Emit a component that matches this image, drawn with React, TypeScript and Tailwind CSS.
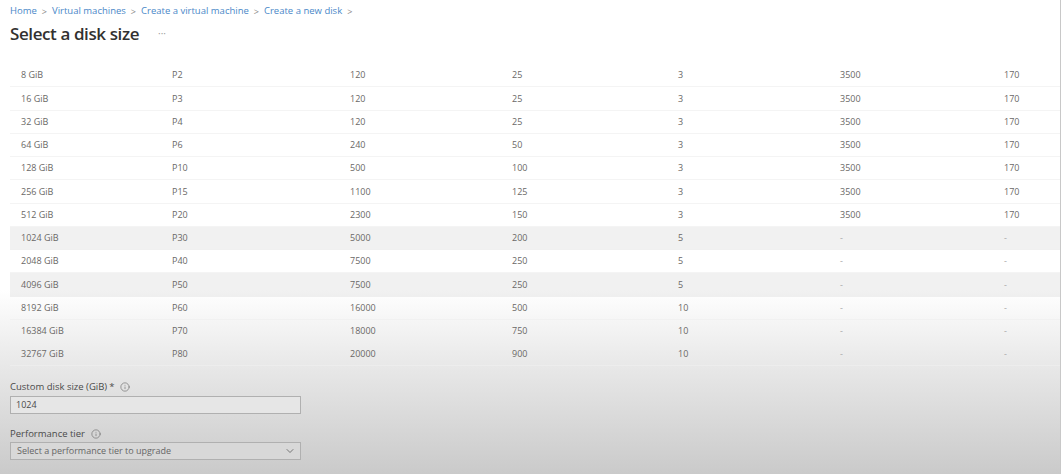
import React from 'react';
import { ChevronDown, Info } from 'lucide-react';

const rows = [
  ['8 GiB', 'P2', '120', '25', '3', '3500', '170'],
  ['16 GiB', 'P3', '120', '25', '3', '3500', '170'],
  ['32 GiB', 'P4', '120', '25', '3', '3500', '170'],
  ['64 GiB', 'P6', '240', '50', '3', '3500', '170'],
  ['128 GiB', 'P10', '500', '100', '3', '3500', '170'],
  ['256 GiB', 'P15', '1100', '125', '3', '3500', '170'],
  ['512 GiB', 'P20', '2300', '150', '3', '3500', '170'],
  ['1024 GiB', 'P30', '5000', '200', '5', '-', '-'],
  ['2048 GiB', 'P40', '7500', '250', '5', '-', '-'],
  ['4096 GiB', 'P50', '7500', '250', '5', '-', '-'],
  ['8192 GiB', 'P60', '16000', '500', '10', '-', '-'],
  ['16384 GiB', 'P70', '18000', '750', '10', '-', '-'],
  ['32767 GiB', 'P80', '20000', '900', '10', '-', '-'],
];

const highlighted = [7, 9];

const crumbs = ['Home', 'Virtual machines', 'Create a virtual machine', 'Create a new disk'];

const App = () => {
  return (
    <div
      className="w-[1061px] h-[474px] overflow-hidden border-r border-[#c8c8c8] bg-[linear-gradient(to_bottom,#ffffff_0px,#ffffff_290px,#eeeeee_345px,#e4e4e4_380px,#cacaca_474px)] text-[#6a6866]"
      style={{ fontFamily: '"Open Sans", "Noto Sans", sans-serif' }}
    >
      <div className="flex items-center gap-[5px] pl-[10px] pt-[5px] h-[18px] text-[9.5px] text-[#4a88c8]">
        {crumbs.map((c) => (
          <React.Fragment key={c}>
            <span>{c}</span>
            <span className="text-[#8a8886] text-[9px]">&gt;</span>
          </React.Fragment>
        ))}
      </div>

      <div className="flex items-center pl-[10px] mt-[3px] h-[26px]">
        <h1 className="text-[17px] text-[#323130] font-semibold tracking-[-0.4px]">Select a disk size</h1>
        <span className="ml-[19px] text-[10px] text-[#a19f9d] leading-none -mt-[2px]">···</span>
      </div>

      <div className="mt-[17px] ml-[10px]">
        {rows.map((r, i) => (
          <div
            key={r[0]}
            className={`grid grid-cols-[151px_178px_162px_166px_162px_164px_1fr] items-center h-[23.25px] pl-[11px] border-b border-[#f0f0f0]/70 text-[9px] ${
              highlighted.includes(i) ? 'bg-black/[0.055]' : ''
            }`}
          >
            {r.map((cell, j) => (
              <span key={j} className={cell === '-' ? 'text-[#a8a8a8]' : ''}>
                {cell}
              </span>
            ))}
          </div>
        ))}
      </div>

      <div className="pl-[10px] mt-[14px]">
        <div className="flex items-center gap-[5px] text-[9.5px] text-[#4a4a4a]">
          <span>Custom disk size (GiB)</span>
          <span className="-ml-[3px]">*</span>
          <Info className="ml-[1px] w-[10px] h-[10px] text-[#6a6a6a]" strokeWidth={1.5} />
        </div>
        <div className="mt-[1px] w-[291px] h-[18px] border border-[#b0b0b0] bg-[#e6e6e6] flex items-center pl-[5px] text-[9px] text-[#4a4a4a]">
          1024
        </div>

        <div className="mt-[13px] flex items-center gap-[6px] text-[9.5px] text-[#4a4a4a]">
          <span>Performance tier</span>
          <Info className="w-[10px] h-[10px] text-[#6a6a6a]" strokeWidth={1.5} />
        </div>
        <div className="mt-[1px] w-[291px] h-[18px] border border-[#b0b0b0] bg-[#d8d8d8] flex items-center justify-between pl-[6px] pr-[4px] text-[9px] text-[#666666]">
          <span>Select a performance tier to upgrade</span>
          <ChevronDown className="w-[12px] h-[12px] text-[#555555]" strokeWidth={1.5} />
        </div>
      </div>
    </div>
  );
};

export default App;
